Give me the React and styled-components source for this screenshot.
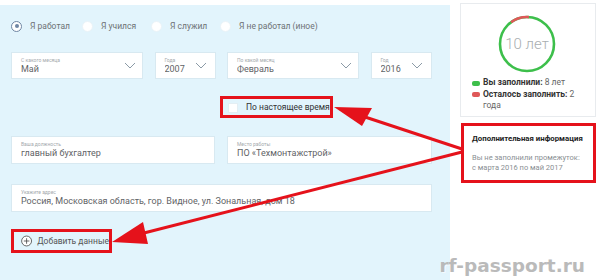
import React from "react";
import styled, { createGlobalStyle } from "styled-components";

const GlobalStyle = createGlobalStyle`
  html, body {
    margin: 0;
    padding: 0;
    background: #fff;
  }
`;

const RED = "#e5121b";

const Page = styled.div`
  position: relative;
  display: flex;
  width: 600px;
  height: 280px;
  overflow: hidden;
  background: #fff;
  font-family: Roboto, "Liberation Sans", Arial, sans-serif;
  color: #444;
`;

const Main = styled.div`
  width: 450px;
  margin-top: 5px;
  padding: 15px 18px 0 11px;
  box-sizing: border-box;
  background: #e2f4fc;
  display: flex;
  flex-direction: column;
`;

const RadioRow = styled.div`
  display: grid;
  grid-template-columns: 71px 69px 69px auto;
  align-items: center;
  height: 12px;
`;

const RadioItem = styled.label`
  display: flex;
  align-items: center;
  gap: 8px;
  font-size: 8.5px;
  color: #6e7275;
  white-space: nowrap;
`;

const RadioDot = styled.span`
  width: 11px;
  height: 11px;
  border-radius: 50%;
  box-sizing: border-box;
  background: #fff;
  border: 1px solid ${(p) => (p.$checked ? "#6f86a3" : "#eaf3f8")};
  display: flex;
  align-items: center;
  justify-content: center;
  &::after {
    content: "";
    width: 4px;
    height: 4px;
    border-radius: 50%;
    background: ${(p) => (p.$checked ? "#6f86a3" : "transparent")};
  }
`;

const SelectRow = styled.div`
  display: grid;
  grid-template-columns: 132px 61px 132px 61px;
  column-gap: 11.5px;
  margin-top: 20px;
`;

const Field = styled.div`
  height: 27px;
  box-sizing: border-box;
  background: #fff;
  border: 1px solid #d8e9f1;
  display: flex;
  align-items: center;
  justify-content: space-between;
  padding: 0 ${(p) => p.$padRight || 6}px 0 9px;
`;

const FieldText = styled.div`
  display: flex;
  flex-direction: column;
  gap: 1px;
  min-width: 0;
`;

const FieldLabel = styled.span`
  font-size: 5px;
  line-height: 6px;
  color: #a4a9ad;
  white-space: nowrap;
`;

const FieldValue = styled.span`
  font-size: ${(p) => p.$size || 9}px;
  line-height: 11px;
  color: #5f6366;
  white-space: nowrap;
  overflow: hidden;
`;

const CheckRow = styled.div`
  display: flex;
  margin-top: 17px;
  padding-left: 209px;
`;

const Highlight = styled.div`
  border: 3px solid ${RED};
  display: flex;
  align-items: center;
  box-sizing: border-box;
  height: ${(p) => p.$h}px;
  width: ${(p) => p.$w}px;
  padding-left: ${(p) => p.$pl}px;
  gap: ${(p) => p.$gap}px;
`;

const CheckBox = styled.span`
  width: 10px;
  height: 10px;
  background: #fff;
  border: 1px solid #e4eef3;
  box-sizing: border-box;
  margin-top: 2px;
`;

const CheckLabel = styled.span`
  font-size: 8.5px;
  color: #333;
  white-space: nowrap;
`;

const InputRow = styled.div`
  display: grid;
  grid-template-columns: 204px 205px;
  column-gap: 12px;
  margin-top: 18px;
`;

const WideField = styled(Field)`
  height: 28px;
  margin-top: ${(p) => p.$mt || 0}px;
`;

const AddRow = styled.div`
  display: flex;
  margin-top: 17px;
`;

const AddText = styled.span`
  font-size: 8.5px;
  color: #555;
  white-space: nowrap;
`;

const Sidebar = styled.div`
  width: 150px;
  padding: 3px 4px 0 10px;
  box-sizing: border-box;
  display: flex;
  flex-direction: column;
`;

const StatsCard = styled.div`
  height: 114px;
  box-sizing: border-box;
  border: 1px solid #e8ebee;
  padding: 10px 10px 0 11px;
  display: flex;
  flex-direction: column;
`;

const Ring = styled.div`
  position: relative;
  width: 60px;
  height: 60px;
  align-self: center;
  margin-left: -3px;
  display: flex;
  align-items: center;
  justify-content: center;
`;

const RingSvg = styled.svg`
  position: absolute;
  inset: 0;
`;

const RingText = styled.span`
  font-size: 15px;
  font-weight: 300;
  color: #a9aeb1;
`;

const Legend = styled.div`
  margin-top: 3px;
  display: flex;
  flex-direction: column;
  font-size: 8.5px;
  line-height: 11.5px;
  color: #666;
`;

const LegendItem = styled.div`
  display: flex;
  align-items: flex-start;
  gap: 3px;
`;

const LegendText = styled.p`
  margin: 0;
  b {
    color: #333;
    font-weight: 700;
  }
`;

const Swatch = styled.span`
  flex: none;
  width: 8px;
  height: 5px;
  border-radius: 2px;
  margin-top: 3.5px;
  background: ${(p) => p.$color};
`;

const InfoBox = styled.div`
  margin-top: 6px;
  margin-left: 1px;
  height: 60px;
  box-sizing: border-box;
  border: 3px solid ${RED};
  padding: 8px 5px 0 8px;
`;

const InfoTitle = styled.div`
  font-size: 7.8px;
  font-weight: 700;
  color: #222;
  white-space: nowrap;
`;

const InfoBody = styled.div`
  margin-top: 10px;
  font-size: 7.5px;
  line-height: 10px;
  color: #8a8f93;
`;

const Arrows = styled.svg`
  position: absolute;
  left: 0;
  top: 0;
  pointer-events: none;
`;

const Watermark = styled.div`
  position: absolute;
  right: 15px;
  bottom: 4px;
  font-family: "DejaVu Sans", Verdana, sans-serif;
  font-weight: 700;
  font-size: 18.5px;
  color: #b7b7b7;
  text-shadow: 1px 1px 0 rgba(255, 255, 255, 0.7);
  opacity: 0.95;
`;

const Chevron = () => (
  <svg width="12" height="7" viewBox="0 0 12 7">
    <polyline points="1,1 6,6 11,1" fill="none" stroke="#8b9aa6" strokeWidth="1" />
  </svg>
);

const PlusIcon = () => (
  <svg width="14" height="14" viewBox="0 0 14 14">
    <circle cx="7" cy="7" r="6.2" fill="#fff" stroke="#444" strokeWidth="1" />
    <line x1="7" y1="3.5" x2="7" y2="10.5" stroke="#444" strokeWidth="1" />
    <line x1="3.5" y1="7" x2="10.5" y2="7" stroke="#444" strokeWidth="1" />
  </svg>
);

const radios = [
  { label: "Я работал", checked: true },
  { label: "Я учился" },
  { label: "Я служил" },
  { label: "Я не работал (иное)" },
];

const selects = [
  { label: "С какого месяца", value: "Май", pad: 6 },
  { label: "Года", value: "2007", pad: 8 },
  { label: "По какой месяц", value: "Февраль", pad: 6 },
  { label: "Год", value: "2016", pad: 8 },
];

export default function App() {
  return (
    <>
      <GlobalStyle />
      <Page>
        <Main>
          <RadioRow>
            {radios.map((r) => (
              <RadioItem key={r.label}>
                <RadioDot $checked={r.checked} />
                {r.label}
              </RadioItem>
            ))}
          </RadioRow>

          <SelectRow>
            {selects.map((s) => (
              <Field key={s.label} $padRight={s.pad}>
                <FieldText>
                  <FieldLabel>{s.label}</FieldLabel>
                  <FieldValue>{s.value}</FieldValue>
                </FieldText>
                <Chevron />
              </Field>
            ))}
          </SelectRow>

          <CheckRow>
            <Highlight $w={113} $h={22} $pl={5} $gap={8}>
              <CheckBox />
              <CheckLabel>По настоящее время</CheckLabel>
            </Highlight>
          </CheckRow>

          <InputRow>
            <WideField>
              <FieldText>
                <FieldLabel>Ваша должность</FieldLabel>
                <FieldValue>главный бухгалтер</FieldValue>
              </FieldText>
            </WideField>
            <WideField>
              <FieldText>
                <FieldLabel>Место работы</FieldLabel>
                <FieldValue>ПО «Техмонтажстрой»</FieldValue>
              </FieldText>
            </WideField>
          </InputRow>

          <WideField $mt={20}>
            <FieldText>
              <FieldLabel>Укажите адрес</FieldLabel>
              <FieldValue>
                Россия, Московская область, гор. Видное, ул. Зональная, дом 18
              </FieldValue>
            </FieldText>
          </WideField>

          <AddRow>
            <Highlight $w={101} $h={24} $pl={7} $gap={5}>
              <PlusIcon />
              <AddText>Добавить данные</AddText>
            </Highlight>
          </AddRow>
        </Main>

        <Sidebar>
          <StatsCard>
            <Ring>
              <RingSvg width="60" height="60" viewBox="0 0 60 60">
                <circle cx="30" cy="30" r="27" fill="none" stroke="#3dbf4b" strokeWidth="2.6" />
                <path d="M14.1 8.2 A27 27 0 0 1 31.9 3.1" fill="none" stroke="#df5858" strokeWidth="2.6" />
              </RingSvg>
              <RingText>10 лет</RingText>
            </Ring>
            <Legend>
              <LegendItem>
                <Swatch $color="#3dbf4b" />
                <LegendText>
                  <b>Вы заполнили:</b> 8 лет
                </LegendText>
              </LegendItem>
              <LegendItem>
                <Swatch $color="#df5858" />
                <LegendText>
                  <b>Осталось заполнить:</b> 2
                  <br />
                  года
                </LegendText>
              </LegendItem>
            </Legend>
          </StatsCard>

          <InfoBox>
            <InfoTitle>Дополнительная информация</InfoTitle>
            <InfoBody>
              Вы не заполнили промежуток:
              <br />с марта 2016 по май 2017
            </InfoBody>
          </InfoBox>
        </Sidebar>

        <Arrows width="600" height="280" viewBox="0 0 600 280">
          <line x1="462" y1="149" x2="362" y2="116" stroke={RED} strokeWidth="3" />
          <polygon points="334,107 372,108 362,126" fill={RED} />
          <line x1="462" y1="152" x2="140" y2="234" stroke={RED} strokeWidth="3" />
          <polygon points="112,242 143,222 148,244" fill={RED} />
        </Arrows>

        <Watermark>rf-passport.ru</Watermark>
      </Page>
    </>
  );
}
